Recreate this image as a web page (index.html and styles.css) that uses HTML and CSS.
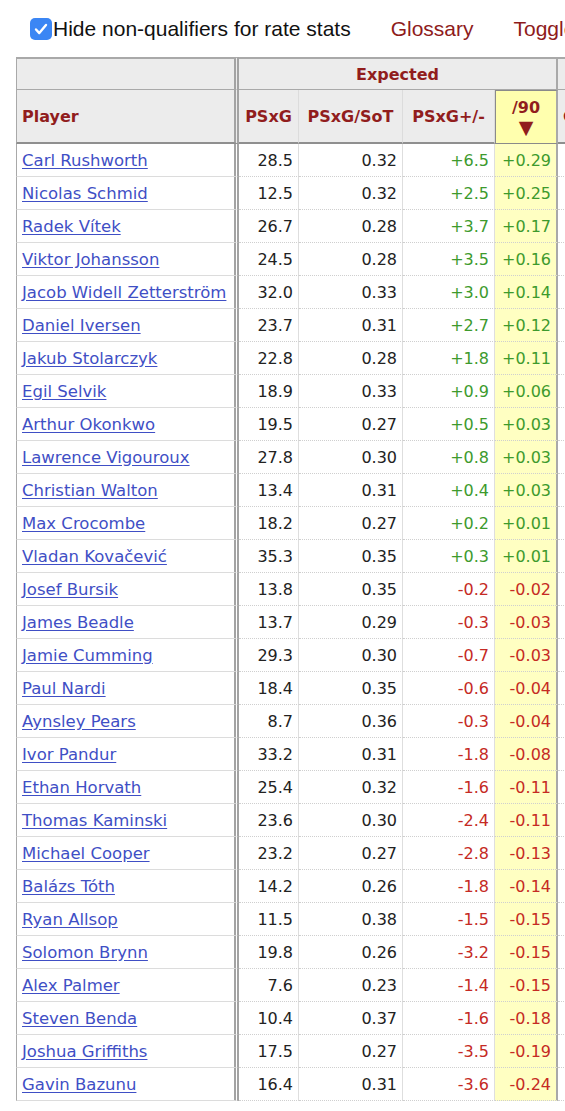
FILE: index.html
```html
<!DOCTYPE html>
<html lang="en">
  <head>
    <meta charset="UTF-8" />
    <meta name="viewport" content="width=device-width, initial-scale=1.0" />
    <title>Advanced Goalkeeping</title>
    <link rel="stylesheet" href="styles.css">
  </head>
  <body>
    <div class="toolbar">
      <label class="qual">
        <span class="check">
          <svg viewBox="0 0 22 22" width="22" height="22"><path d="M6 11.5l3.3 3.6L16 7" fill="none" stroke="#fff" stroke-width="2.4" stroke-linecap="round" stroke-linejoin="round"/></svg>
        </span>
        Hide non-qualifiers for rate stats
      </label>
      <a class="tool_link" href="#">Glossary</a>
      <a class="tool_link" href="#">Toggle Per Match Stats</a>
    </div>

    <div class="table_wrap">
      <table class="stats">
        <colgroup>
          <col class="c_player" />
          <col class="c_psxg" />
          <col class="c_sot" />
          <col class="c_pm" />
          <col class="c_p90" />
          <col class="c_next" />
        </colgroup>
        <thead>
          <tr class="over_header">
            <th class="player_col"></th>
            <th colspan="4" class="group_end">Expected</th>
            <th>Launched</th>
          </tr>
          <tr class="col_header">
            <th class="player_col left">Player</th>
            <th>PSxG</th>
            <th>PSxG/SoT</th>
            <th>PSxG+/-</th>
            <th class="sorted group_end">/90<span class="arrow">▼</span></th>
            <th class="left">Cmp</th>
          </tr>
        </thead>
        <tbody>
          <tr><td class="player_col"><a href="#">Carl Rushworth</a></td><td>28.5</td><td>0.32</td><td class="pos">+6.5</td><td class="sorted pos">+0.29</td><td>120</td></tr>
          <tr><td class="player_col"><a href="#">Nicolas Schmid</a></td><td>12.5</td><td>0.32</td><td class="pos">+2.5</td><td class="sorted pos">+0.25</td><td>98</td></tr>
          <tr><td class="player_col"><a href="#">Radek Vítek</a></td><td>26.7</td><td>0.28</td><td class="pos">+3.7</td><td class="sorted pos">+0.17</td><td>110</td></tr>
          <tr><td class="player_col"><a href="#">Viktor Johansson</a></td><td>24.5</td><td>0.28</td><td class="pos">+3.5</td><td class="sorted pos">+0.16</td><td>131</td></tr>
          <tr><td class="player_col"><a href="#">Jacob Widell Zetterström</a></td><td>32.0</td><td>0.33</td><td class="pos">+3.0</td><td class="sorted pos">+0.14</td><td>142</td></tr>
          <tr><td class="player_col"><a href="#">Daniel Iversen</a></td><td>23.7</td><td>0.31</td><td class="pos">+2.7</td><td class="sorted pos">+0.12</td><td>105</td></tr>
          <tr><td class="player_col"><a href="#">Jakub Stolarczyk</a></td><td>22.8</td><td>0.28</td><td class="pos">+1.8</td><td class="sorted pos">+0.11</td><td>99</td></tr>
          <tr><td class="player_col"><a href="#">Egil Selvik</a></td><td>18.9</td><td>0.33</td><td class="pos">+0.9</td><td class="sorted pos">+0.06</td><td>87</td></tr>
          <tr><td class="player_col"><a href="#">Arthur Okonkwo</a></td><td>19.5</td><td>0.27</td><td class="pos">+0.5</td><td class="sorted pos">+0.03</td><td>93</td></tr>
          <tr><td class="player_col"><a href="#">Lawrence Vigouroux</a></td><td>27.8</td><td>0.30</td><td class="pos">+0.8</td><td class="sorted pos">+0.03</td><td>150</td></tr>
          <tr><td class="player_col"><a href="#">Christian Walton</a></td><td>13.4</td><td>0.31</td><td class="pos">+0.4</td><td class="sorted pos">+0.03</td><td>77</td></tr>
          <tr><td class="player_col"><a href="#">Max Crocombe</a></td><td>18.2</td><td>0.27</td><td class="pos">+0.2</td><td class="sorted pos">+0.01</td><td>101</td></tr>
          <tr><td class="player_col"><a href="#">Vladan Kovačević</a></td><td>35.3</td><td>0.35</td><td class="pos">+0.3</td><td class="sorted pos">+0.01</td><td>164</td></tr>
          <tr><td class="player_col"><a href="#">Josef Bursik</a></td><td>13.8</td><td>0.35</td><td class="neg">-0.2</td><td class="sorted neg">-0.02</td><td>70</td></tr>
          <tr><td class="player_col"><a href="#">James Beadle</a></td><td>13.7</td><td>0.29</td><td class="neg">-0.3</td><td class="sorted neg">-0.03</td><td>68</td></tr>
          <tr><td class="player_col"><a href="#">Jamie Cumming</a></td><td>29.3</td><td>0.30</td><td class="neg">-0.7</td><td class="sorted neg">-0.03</td><td>133</td></tr>
          <tr><td class="player_col"><a href="#">Paul Nardi</a></td><td>18.4</td><td>0.35</td><td class="neg">-0.6</td><td class="sorted neg">-0.04</td><td>84</td></tr>
          <tr><td class="player_col"><a href="#">Aynsley Pears</a></td><td>8.7</td><td>0.36</td><td class="neg">-0.3</td><td class="sorted neg">-0.04</td><td>45</td></tr>
          <tr><td class="player_col"><a href="#">Ivor Pandur</a></td><td>33.2</td><td>0.31</td><td class="neg">-1.8</td><td class="sorted neg">-0.08</td><td>159</td></tr>
          <tr><td class="player_col"><a href="#">Ethan Horvath</a></td><td>25.4</td><td>0.32</td><td class="neg">-1.6</td><td class="sorted neg">-0.11</td><td>120</td></tr>
          <tr><td class="player_col"><a href="#">Thomas Kaminski</a></td><td>23.6</td><td>0.30</td><td class="neg">-2.4</td><td class="sorted neg">-0.11</td><td>112</td></tr>
          <tr><td class="player_col"><a href="#">Michael Cooper</a></td><td>23.2</td><td>0.27</td><td class="neg">-2.8</td><td class="sorted neg">-0.13</td><td>126</td></tr>
          <tr><td class="player_col"><a href="#">Balázs Tóth</a></td><td>14.2</td><td>0.26</td><td class="neg">-1.8</td><td class="sorted neg">-0.14</td><td>66</td></tr>
          <tr><td class="player_col"><a href="#">Ryan Allsop</a></td><td>11.5</td><td>0.38</td><td class="neg">-1.5</td><td class="sorted neg">-0.15</td><td>59</td></tr>
          <tr><td class="player_col"><a href="#">Solomon Brynn</a></td><td>19.8</td><td>0.26</td><td class="neg">-3.2</td><td class="sorted neg">-0.15</td><td>102</td></tr>
          <tr><td class="player_col"><a href="#">Alex Palmer</a></td><td>7.6</td><td>0.23</td><td class="neg">-1.4</td><td class="sorted neg">-0.15</td><td>40</td></tr>
          <tr><td class="player_col"><a href="#">Steven Benda</a></td><td>10.4</td><td>0.37</td><td class="neg">-1.6</td><td class="sorted neg">-0.18</td><td>52</td></tr>
          <tr><td class="player_col"><a href="#">Joshua Griffiths</a></td><td>17.5</td><td>0.27</td><td class="neg">-3.5</td><td class="sorted neg">-0.19</td><td>88</td></tr>
          <tr><td class="player_col"><a href="#">Gavin Bazunu</a></td><td>16.4</td><td>0.31</td><td class="neg">-3.6</td><td class="sorted neg">-0.24</td><td>81</td></tr>
        </tbody>
      </table>
    </div>
  </body>
</html>
```

FILE: styles.css
```css
* {
  margin: 0;
  padding: 0;
  box-sizing: border-box;
}

body {
  background-color: #fff;
  font-family: "DejaVu Sans", Verdana, sans-serif;
  color: #222;
  overflow: hidden;
}

.toolbar {
  display: flex;
  align-items: center;
  height: 57px;
  padding: 0 0 0 30px;
  white-space: nowrap;
  font-family: "Liberation Sans", Arial, sans-serif;
  font-size: 21px;
}
.qual {
  display: flex;
  align-items: center;
  gap: 1px;
  color: #111;
}
.check {
  display: inline-block;
  width: 22px;
  height: 22px;
  border-radius: 5px;
  background-color: #3b86f4;
}
.check svg {
  display: block;
}
.tool_link {
  color: #8e1b1b;
  text-decoration: none;
  margin-left: 40px;
}

.table_wrap {
  margin-left: 16px;
  overflow: hidden;
}

.stats {
  table-layout: fixed;
  border-collapse: separate;
  border-spacing: 0;
  width: 702px;
  font-size: 16px;
}
.c_player { width: 223px; }
.c_psxg { width: 60px; }
.c_sot { width: 104px; }
.c_pm { width: 92px; }
.c_p90 { width: 63px; }
.c_next { width: 160px; }

.stats th {
  background-color: #ececec;
  color: #911d1d;
  font-weight: bold;
  white-space: nowrap;
  text-align: center;
}
.over_header th {
  height: 33px;
  border-top: 2px solid #a9a9a9;
  border-bottom: 1px solid #a9a9a9;
}
.col_header th {
  height: 54px;
  padding: 0 5px;
  border-bottom: 2px solid #8f8f8f;
  border-right: 1px solid #dcdcdc;
}
.stats th.left {
  text-align: left;
}
.stats .player_col {
  border-left: 1px solid #a9a9a9;
  border-right: 5px double #a3a3a3;
}
.stats .group_end {
  border-right: 2px solid #a9a9a9;
}
.col_header th.sorted {
  background-color: #ffffae;
  border: 1px solid #8a8a8a;
  border-right: 2px solid #a9a9a9;
  line-height: 20px;
}
.arrow {
  display: block;
  font-size: 19px;
  line-height: 19px;
}

.stats td {
  height: 33px;
  padding: 0 5px;
  text-align: right;
  white-space: nowrap;
  border-bottom: 1px dotted #cfcfcf;
  border-right: 1px solid #dedede;
}
.stats td.player_col {
  text-align: left;
  border-bottom: 1px solid #dcdcdc;
  border-right: 5px double #a3a3a3;
}
.stats td a {
  font-size: 16.5px;
  color: #3f4fc5;
  text-decoration: underline;
  text-underline-offset: 2px;
}
.stats td.sorted {
  background-color: #ffffc2;
  border-right: 2px solid #a9a9a9;
}
.pos {
  color: #3d9a2d;
}
.neg {
  color: #c52a24;
}
```
